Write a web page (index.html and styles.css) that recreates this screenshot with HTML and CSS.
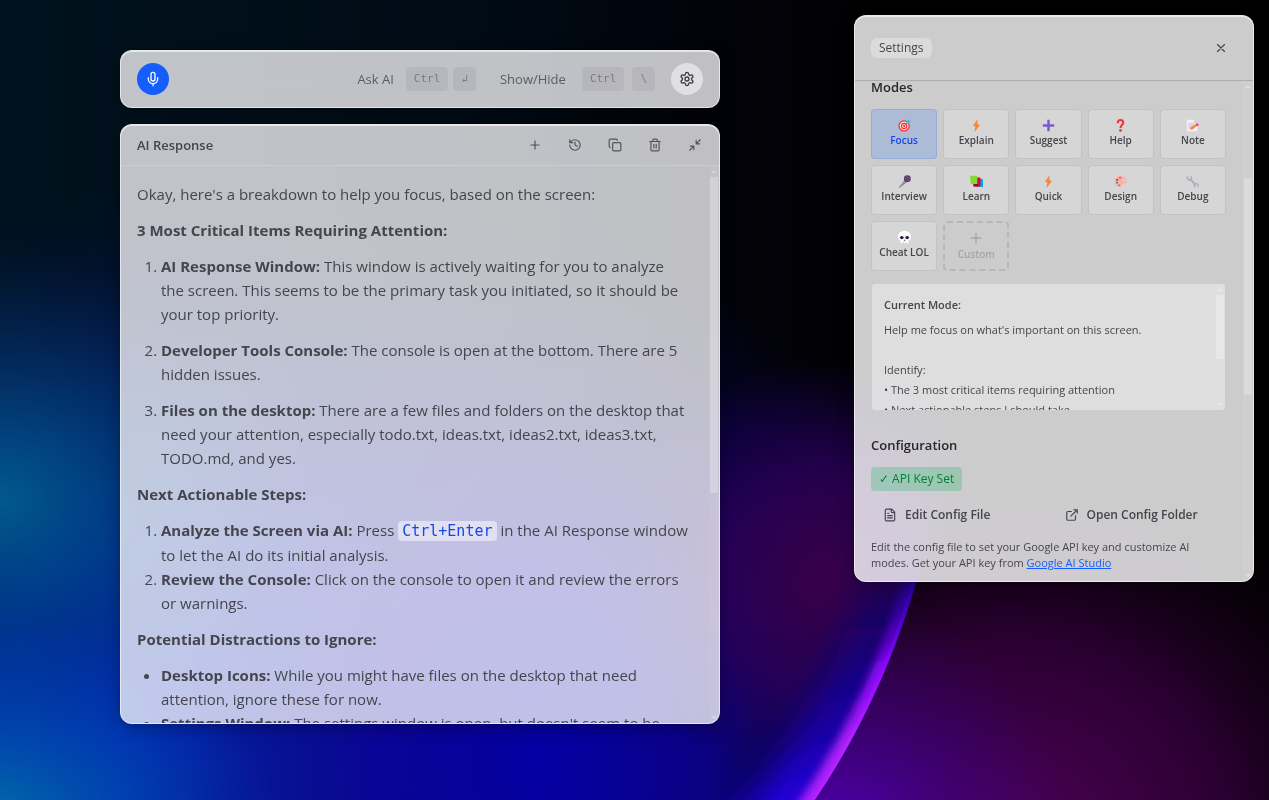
FILE: index.html
```html
<!DOCTYPE html>
<html lang="en">
<head>
<meta charset="utf-8">
<meta name="viewport" content="width=device-width, initial-scale=1">
<title>AI Response</title>
<link rel="stylesheet" href="styles.css">
</head>
<body>
<svg class="wallpaper" viewBox="0 0 1269 800" preserveAspectRatio="xMidYMid slice" aria-hidden="true">
  <defs>
    <radialGradient id="teal" gradientUnits="userSpaceOnUse" cx="0" cy="0" r="1" gradientTransform="translate(-20 830) scale(300 220)"><stop offset="0" stop-color="#0078a4"/><stop offset=".4" stop-color="#0058b0" stop-opacity=".7"/><stop offset="1" stop-color="#0040b8" stop-opacity="0"/></radialGradient>
    <radialGradient id="steel" gradientUnits="userSpaceOnUse" cx="0" cy="0" r="1" gradientTransform="translate(0 500) scale(300 250)"><stop offset="0" stop-color="#005a8e"/><stop offset=".3" stop-color="#004c84" stop-opacity=".75"/><stop offset="1" stop-color="#003058" stop-opacity="0"/></radialGradient>
    <radialGradient id="blue" gradientUnits="userSpaceOnUse" cx="0" cy="0" r="1" gradientTransform="translate(180 720) scale(600 540)"><stop offset="0" stop-color="#0028b8"/><stop offset=".35" stop-color="#0024a8" stop-opacity=".95"/><stop offset=".7" stop-color="#08146c" stop-opacity=".5"/><stop offset="1" stop-color="#001040" stop-opacity="0"/></radialGradient>
    <radialGradient id="deep" gradientUnits="userSpaceOnUse" cx="0" cy="0" r="1" gradientTransform="translate(540 760) scale(420 520)"><stop offset="0" stop-color="#0400a4"/><stop offset=".4" stop-color="#0c0094" stop-opacity=".85"/><stop offset="1" stop-color="#100060" stop-opacity="0"/></radialGradient>
    <radialGradient id="violet" gradientUnits="userSpaceOnUse" cx="0" cy="0" r="1" gradientTransform="translate(820 580) scale(200 220)"><stop offset="0" stop-color="#380048"/><stop offset=".5" stop-color="#2c0058" stop-opacity=".8"/><stop offset="1" stop-color="#180060" stop-opacity="0"/></radialGradient>
    <radialGradient id="outer" gradientUnits="userSpaceOnUse" cx="0" cy="0" r="1" gradientTransform="translate(1010 840) scale(440 400)"><stop offset="0" stop-color="#500058"/><stop offset=".5" stop-color="#32003a" stop-opacity=".85"/><stop offset="1" stop-color="#100010" stop-opacity="0"/></radialGradient>
    <radialGradient id="outerBlue" gradientUnits="userSpaceOnUse" cx="840" cy="830" r="230"><stop offset="0" stop-color="#5000b0"/><stop offset="1" stop-color="#300080" stop-opacity="0"/></radialGradient>
    <linearGradient id="top" x1="0" y1="0" x2="1" y2="0"><stop offset="0" stop-color="#00121e"/><stop offset=".45" stop-color="#000c16"/><stop offset=".75" stop-color="#020208"/><stop offset="1" stop-color="#000"/></linearGradient>
    <linearGradient id="rim" gradientUnits="userSpaceOnUse" x1="0" y1="540" x2="0" y2="740"><stop offset="0" stop-color="#2000a0" stop-opacity="0"/><stop offset=".3" stop-color="#3800c0" stop-opacity=".7"/><stop offset=".65" stop-color="#9008ff"/><stop offset="1" stop-color="#b420ff"/></linearGradient>
    <linearGradient id="rimBlue" gradientUnits="userSpaceOnUse" x1="0" y1="560" x2="0" y2="800"><stop offset="0" stop-color="#0c0070" stop-opacity="0"/><stop offset=".4" stop-color="#0c0084" stop-opacity=".8"/><stop offset="1" stop-color="#2400e0"/></linearGradient>
    <filter id="soft" x="-20%" y="-20%" width="140%" height="140%"><feGaussianBlur stdDeviation="16"/></filter>
    <filter id="fine" x="-20%" y="-20%" width="140%" height="140%"><feGaussianBlur stdDeviation="5"/></filter>
    <clipPath id="orb"><circle cx="175" cy="370" r="771"/></clipPath>
  </defs>
  <rect width="1269" height="800" fill="#000"/>
  <rect width="1269" height="800" fill="url(#outer)"/>
  <rect width="1269" height="800" fill="url(#outerBlue)"/>
  <g clip-path="url(#orb)">
    <rect width="1000" height="800" fill="url(#top)"/>
    <rect width="1000" height="800" fill="url(#blue)"/>
    <rect width="1000" height="800" fill="url(#deep)"/>
    <rect width="1000" height="800" fill="url(#steel)"/>
    <rect width="1000" height="800" fill="url(#teal)"/>
    <rect width="1000" height="800" fill="url(#violet)"/>
    <circle cx="175" cy="370" r="750" fill="none" stroke="url(#rimBlue)" stroke-width="60" filter="url(#soft)"/>
    <circle cx="175" cy="370" r="766" fill="none" stroke="url(#rim)" stroke-width="14" filter="url(#fine)"/>
    <circle cx="175" cy="370" r="769" fill="none" stroke="url(#rim)" stroke-width="4"/>
  </g>
</svg>

<svg class="symbols" aria-hidden="true">
  <symbol id="i-bolt" viewBox="0 0 16 16"><path d="M9.5 0 3.5 8.5h3.2L5.5 16l7-9H9z" fill="#ff822d"/></symbol>
  <symbol id="i-plus" viewBox="0 0 24 24"><path d="M5 12h14M12 5v14"/></symbol>
</svg>

<main class="desktop">
  <header class="window toolbar">
    <button class="round mic" aria-label="Start listening"><svg viewBox="0 0 24 24" class="icon"><rect x="9" y="2" width="6" height="13" rx="3"/><path d="M19 10v2a7 7 0 0 1-14 0v-2M12 19v3"/></svg></button>
    <div class="shortcut"><span>Ask AI</span><span class="keys"><kbd>Ctrl</kbd><kbd>↲</kbd></span></div>
    <div class="shortcut wide"><span>Show/Hide</span><span class="keys"><kbd>Ctrl</kbd><kbd>\</kbd></span></div>
    <button class="round gear" aria-label="Settings"><svg viewBox="0 0 24 24" class="icon"><path d="M12.2 2h-.4a2 2 0 0 0-2 2v.2a2 2 0 0 1-1 1.7l-.4.3a2 2 0 0 1-2 0l-.2-.1a2 2 0 0 0-2.700.7l-.2.4a2 2 0 0 0 .7 2.700l.2.1a2 2 0 0 1 1 1.700v.6a2 2 0 0 1-1 1.700l-.2.1a2 2 0 0 0-.7 2.700l.2.4a2 2 0 0 0 2.700.7l.2-.1a2 2 0 0 1 2 0l.4.3a2 2 0 0 1 1 1.700v.2a2 2 0 0 0 2 2h.4a2 2 0 0 0 2-2v-.2a2 2 0 0 1 1-1.700l.4-.3a2 2 0 0 1 2 0l.2.1a2 2 0 0 0 2.700-.7l.2-.4a2 2 0 0 0-.7-2.700l-.2-.1a2 2 0 0 1-1-1.700v-.6a2 2 0 0 1 1-1.700l.2-.1a2 2 0 0 0 .7-2.700l-.2-.4a2 2 0 0 0-2.700-.7l-.2.1a2 2 0 0 1-2 0l-.4-.3a2 2 0 0 1-1-1.700V4a2 2 0 0 0-2-2z"/><circle cx="12" cy="12" r="3"/></svg></button>
  </header>

  <section class="window response">
    <div class="response-head">
      <h1>AI Response</h1>
      <div class="actions">
        <button aria-label="New"><svg class="icon"><use href="#i-plus"/></svg></button>
        <button aria-label="History"><svg viewBox="0 0 24 24" class="icon"><path d="M3 12a9 9 0 1 0 9-9 9.750 9.750 0 0 0-6.740 2.740L3 8M3 3v5h5M12 7v5l4 2"/></svg></button>
        <button aria-label="Copy"><svg viewBox="0 0 24 24" class="icon"><rect x="8" y="8" width="14" height="14" rx="2"/><path d="M4 16a2 2 0 0 1-2-2V4a2 2 0 0 1 2-2h10a2 2 0 0 1 2 2"/></svg></button>
        <button aria-label="Delete"><svg viewBox="0 0 24 24" class="icon"><path d="M3 6h18M19 6v14a2 2 0 0 1-2 2H7a2 2 0 0 1-2-2V6M8 6V4a2 2 0 0 1 2-2h4a2 2 0 0 1 2 2v2M10 11v6M14 11v6"/></svg></button>
        <button aria-label="Collapse"><svg viewBox="0 0 24 24" class="icon"><path d="M4 14h6v6M10 14l-7 7M20 10h-6V4M14 10l7-7"/></svg></button>
      </div>
    </div>
    <div class="response-body">
      <article class="prose">
        <p>Okay, here's a breakdown to help you focus, based on the screen:</p>
        <p><strong>3 Most Critical Items Requiring Attention:</strong></p>
        <ol class="loose">
          <li><strong>AI Response Window:</strong> This window is actively waiting for you to analyze the screen. This seems to be the primary task you initiated, so it should be your top priority.</li>
          <li><strong>Developer Tools Console:</strong> The console is open at the bottom. There are 5 hidden issues.</li>
          <li><strong>Files on the desktop:</strong> There are a few files and folders on the desktop that need your attention, especially todo.txt, ideas.txt, ideas2.txt, ideas3.txt, TODO.md, and yes.</li>
        </ol>
        <p><strong>Next Actionable Steps:</strong></p>
        <ol>
          <li><strong>Analyze the Screen via AI:</strong> Press <code>Ctrl+Enter</code> in the AI Response window to let the AI do its initial analysis.</li>
          <li><strong>Review the Console:</strong> Click on the console to open it and review the errors or warnings.</li>
        </ol>
        <p><strong>Potential Distractions to Ignore:</strong></p>
        <ul>
          <li><strong>Desktop Icons:</strong> While you might have files on the desktop that need attention, ignore these for now.</li>
          <li><strong>Settings Window:</strong> The settings window is open, but doesn't seem to be</li>
        </ul>
      </article>
      <div class="scrollbar" aria-hidden="true"><i class="up"></i><div class="track"><div class="thumb thumb-response"></div></div><i class="down"></i></div>
    </div>
  </section>

  <aside class="window settings">
    <div class="settings-head">
      <h2 class="pill">Settings</h2>
      <button aria-label="Close"><svg viewBox="0 0 24 24" class="icon"><path d="M18 6 6 18M6 6l12 12"/></svg></button>
    </div>
    <div class="settings-body">
      <div class="settings-content">
        <h3>Modes</h3>
        <div class="modes">
          <button class="mode active"><svg viewBox="0 0 16 16"><circle cx="7.500" cy="8.500" r="7" fill="#f8312f"/><circle cx="7.500" cy="8.500" r="5.400" fill="#f4e6e6"/><circle cx="7.500" cy="8.500" r="3.900" fill="#f8312f"/><circle cx="7.500" cy="8.500" r="2.500" fill="#f4e6e6"/><circle cx="7.500" cy="8.500" r="1.300" fill="#f8312f"/><path d="m8 8 4-4" stroke="#1990d8" stroke-width="1.200"/><path d="m10 6 .5-3.500L13.500 0l.5 2 2 .5-2.500 3z" fill="#42b8f5"/></svg>Focus</button>
          <button class="mode"><svg><use href="#i-bolt"/></svg>Explain</button>
          <button class="mode"><svg viewBox="0 0 16 16"><path d="M6.500 1h3v5.500H15v3H9.500V15h-3V9.500H1v-3h5.500z" fill="#7a5bcf"/></svg>Suggest</button>
          <button class="mode"><svg viewBox="0 0 16 16"><path d="M4.500 5.200C4.500 0 11.500.2 11.500 4.400 11.500 7.400 8 7.500 8 11" fill="none" stroke="#f8312f" stroke-width="2.500"/><circle cx="8" cy="14" r="1.700" fill="#f8312f"/></svg>Help</button>
          <button class="mode"><svg viewBox="0 0 16 16"><path d="M1 1h9l4 4v10H1z" fill="#f3eef8"/><path d="M10 1v4h4z" fill="#cdc4d6"/><path d="M3 6h7M3 8.500h8M3 11h5" stroke="#b4acbc"/><path d="m5 13 1-3 6-4 2 2-6 5z" fill="#ff822d"/><path d="m12 6 1.500-1L16 7.500 14 9z" fill="#f92f60"/></svg>Note</button>
          <button class="mode"><svg viewBox="0 0 16 16"><path d="m1 15 7-9 3 3-9 7z" fill="#998f9b"/><circle cx="11.500" cy="4.500" r="4.200" fill="#533566"/><path d="m8 3 6 5M10 1l5 4" stroke="#8f7b9f"/></svg>Interview</button>
          <button class="mode"><svg viewBox="0 0 16 16"><path d="M8 5h8v10l-7-1z" fill="#00a6ed"/><path d="M6 3h7v11H6z" fill="#ca0b4a"/><path d="M4 11h6v3H4z" fill="#990838"/><path d="M0 1h9v10H1z" fill="#86d72f"/></svg>Learn</button>
          <button class="mode"><svg><use href="#i-bolt"/></svg>Quick</button>
          <button class="mode"><svg viewBox="0 0 16 16"><path d="M8 1C3.500 1 1 4 1 8c0 4.500 3 7 6 7 3 0 1.500-3.500 4-4 2-.4 4.500 0 4.500-3C15.500 4 12 1 8 1z" fill="#ffb0a0"/><circle cx="4" cy="6" r="1.200" fill="#ca0b4a"/><circle cx="7.500" cy="3.500" r="1.200" fill="#8d65c5"/><circle cx="3.800" cy="9.500" r="1.200" fill="#00a67d"/><circle cx="6.500" cy="12.500" r="1.200" fill="#5092ff"/><circle cx="12" cy="6.500" r="1.600" fill="#d6d4d4"/></svg>Design</button>
          <button class="mode"><svg viewBox="0 0 16 16"><path d="m4.500 4.500 7.500 8" stroke="#b4acbc" stroke-width="2.400"/><path d="M1.500 1.500v3l3 2 2.500-2-1-3M15 14.500l-.2-3-3-1-2 2 1.500 3" fill="none" stroke="#b4acbc" stroke-width="1.700"/></svg>Debug</button>
          <button class="mode"><svg viewBox="0 0 16 16"><path d="M8 0C3 0 0 3 0 7c0 3 1 4 3 4.500V14q0 1 1 1h8q1 0 1-1v-2.500c2-.5 3-1.500 3-4.500C16 3 13 0 8 0z" fill="#fff"/><ellipse cx="4.700" cy="8" rx="2.300" ry="2" fill="#321b41"/><ellipse cx="11.300" cy="8" rx="2.300" ry="2" fill="#321b41"/><path d="M8 10.500 7.200 12h1.600zM6.500 13v2M9.500 13v2" stroke="#9b8f9f" stroke-width=".5"/></svg>Cheat LOL</button>
          <button class="mode custom"><svg class="icon"><use href="#i-plus"/></svg>Custom</button>
        </div>
        <div class="prompt">
          <div class="prompt-text"><strong>Current Mode:</strong><p>Help me focus on what's important on this screen.

Identify:
• The 3 most critical items requiring attention
• Next actionable steps I should take</p></div>
          <div class="scrollbar" aria-hidden="true"><i class="up"></i><div class="track"><div class="thumb thumb-prompt"></div></div><i class="down"></i></div>
        </div>
        <h3>Configuration</h3>
        <span class="badge">✓ API Key Set</span>
        <div class="links">
          <button><svg viewBox="0 0 24 24" class="icon"><path d="M15 2H6a2 2 0 0 0-2 2v16a2 2 0 0 0 2 2h12a2 2 0 0 0 2-2V7zM14 2v4a2 2 0 0 0 2 2h4M10 9H8M16 13H8M16 17H8"/></svg>Edit Config File</button>
          <button><svg viewBox="0 0 24 24" class="icon"><path d="M15 3h6v6M10 14 21 3M18 13v6a2 2 0 0 1-2 2H5a2 2 0 0 1-2-2V8a2 2 0 0 1 2-2h6"/></svg>Open Config Folder</button>
        </div>
        <p class="hint">Edit the config file to set your Google API key and customize AI modes. Get your API key from <a href="#">Google AI Studio</a></p>
      </div>
      <div class="scrollbar" aria-hidden="true"><i class="up"></i><div class="track"><div class="thumb thumb-settings"></div></div><i class="down"></i></div>
    </div>
  </aside>
</main>
</body>
</html>
```
FILE: styles.css
```css
* { box-sizing: border-box; }

body {
  margin: 0;
  background: #000;
  color: #45454d;
  font-family: "Open Sans", "Noto Sans", sans-serif;
  font-size: 15px;
  line-height: 24px;
  overflow: hidden;
}

h1, h2, h3, p { margin: 0; }

button {
  display: flex;
  align-items: center;
  justify-content: center;
  padding: 0;
  border: 0;
  background: none;
  color: inherit;
  font: inherit;
}

.wallpaper { position: fixed; inset: 0; width: 100%; height: 100%; }
.symbols { position: absolute; width: 0; height: 0; }

.icon {
  width: 14px;
  height: 14px;
  fill: none;
  stroke: currentColor;
  stroke-width: 2;
  stroke-linecap: round;
  stroke-linejoin: round;
}

.desktop { position: relative; height: 100vh; }

.window {
  position: absolute;
  border: 1px solid rgba(255, 255, 255, .6);
  border-radius: 12px;
  background: rgba(246, 246, 248, .78);
  backdrop-filter: blur(24px) saturate(1.2);
  box-shadow: inset 0 1px 0 rgba(255, 255, 255, .6), 0 4px 16px rgba(0, 0, 0, .3);
  overflow: hidden;
}

.toolbar {
  left: 120px;
  top: 50px;
  width: 600px;
  display: flex;
  align-items: center;
  gap: 16px;
  padding: 12px 16px;
  color: #5c5c64;
  font-size: 13px;
}

.round { width: 32px; height: 32px; border-radius: 50%; }
.mic { margin-right: auto; background: #155dfc; color: #fff; }
.mic .icon { width: 16px; height: 16px; }
.gear { background: rgba(255, 255, 255, .5); color: #3f3f46; }
.gear .icon { width: 16px; height: 16px; }

.shortcut, .keys { display: flex; align-items: center; }
.shortcut { gap: 12px; margin-right: 8px; }
.keys { gap: 5px; }
.shortcut.wide { gap: 16px; margin-right: 0; }
.shortcut.wide .keys { gap: 8px; }

kbd {
  padding: 0 8px;
  border-radius: 4px;
  background: rgba(160, 160, 168, .3);
  color: #7c7c84;
  font-family: "DejaVu Sans Mono", monospace;
  font-size: 11px;
  line-height: 24px;
}

.response {
  left: 120px;
  top: 124px;
  width: 600px;
  height: calc(100vh - 200px);
  display: flex;
  flex-direction: column;
}

.response-head {
  display: flex;
  align-items: center;
  justify-content: space-between;
  padding: 8px 12px 8px 16px;
  border-bottom: 1px solid rgba(255, 255, 255, .2);
}

.response-head h1 { font-size: 13px; font-weight: 600; }
.actions { display: flex; gap: 16px; color: #52525b; }
.actions button { width: 24px; height: 24px; }

.response-body, .settings-body { display: flex; flex: 1; min-height: 0; }
.prose { flex: 1; padding: 16px 20px 0 16px; overflow: hidden; }
.prose p { margin-bottom: 12px; }
.prose ol, .prose ul { margin: 0 0 12px; padding-left: 24px; }
.loose li { margin-bottom: 12px; }

code {
  padding: 1px 4px;
  border-radius: 4px;
  background: rgba(255, 255, 255, .5);
  color: #1447e6;
  font-family: "DejaVu Sans Mono", monospace;
  font-size: 15px;
}

.scrollbar {
  display: flex;
  flex-direction: column;
  align-items: center;
  flex: none;
  width: 10px;
  padding: 4px 0;
  background: rgba(255, 255, 255, .06);
}
.scrollbar i { border: 3px solid transparent; }
.scrollbar .up { border-top: 0; border-bottom-color: rgba(255, 255, 255, .3); }
.scrollbar .down { border-bottom: 0; border-top-color: rgba(255, 255, 255, .3); }
.track { flex: 1; padding: 4px 0; }
.thumb { width: 8px; background: rgba(255, 255, 255, .25); }
.thumb-response { height: 59%; }
.thumb-settings { height: 217px; margin-top: 86px; }
.thumb-prompt { height: 64px; }

.settings {
  right: 15px;
  top: 15px;
  width: 400px;
  height: calc(100vh - 233px);
  display: flex;
  flex-direction: column;
  background: rgba(255, 255, 255, .8);
}

.settings-head {
  display: flex;
  align-items: center;
  justify-content: space-between;
  height: 65px;
  padding: 0 20px 0 16px;
  border-bottom: 1px solid rgba(0, 0, 0, .15);
}
.settings-head button { width: 24px; height: 24px; }

.pill {
  padding: 0 8px;
  border-radius: 6px;
  background: rgba(255, 255, 255, .3);
  font-size: 12px;
  font-weight: 500;
  line-height: 20px;
}

.settings-content { flex: 1; padding: 0 17px 0 16px; overflow: hidden; }

h3 { color: #27272a; font-size: 13px; font-weight: 600; line-height: 12px; }

.modes {
  display: grid;
  grid-template-columns: repeat(5, 1fr);
  gap: 6px;
  margin: 16px 0 12px;
}

.mode {
  flex-direction: column;
  height: 50px;
  padding-bottom: 2px;
  border: 1px solid rgba(0, 0, 0, .09);
  border-radius: 4px;
  background: rgba(255, 255, 255, .2);
  font-size: 10px;
  font-weight: 600;
  line-height: 16px;
  white-space: nowrap;
}
.mode svg { width: 13px; height: 13px; }
.mode.active { background: rgba(43, 127, 255, .2); border-color: rgba(43, 100, 255, .2); color: #1447e6; }
.mode.custom { padding: 0; border: 2px dashed rgba(0, 0, 0, .1); background: none; color: #a3a3ac; }
.mode.custom .icon { width: 16px; height: 16px; }

.prompt {
  display: flex;
  height: 128px;
  margin-bottom: 28px;
  border: 1px solid rgba(0, 0, 0, .08);
  border-radius: 4px;
  background: rgba(255, 255, 255, .35);
  font-size: 11px;
  line-height: 20px;
  overflow: hidden;
}
.prompt-text { flex: 1; padding: 11px 12px 0; }
.prompt strong { display: block; margin-bottom: 5px; font-weight: 600; }
.prompt p { white-space: pre-line; }

.badge {
  display: inline-block;
  margin-top: 16px;
  padding: 0 8px;
  border-radius: 4px;
  background: rgba(0, 180, 80, .24);
  color: #008236;
  font-size: 12px;
  line-height: 24px;
}

.links {
  display: grid;
  grid-template-columns: 1fr 1fr;
  gap: 8px;
  margin: 8px 0;
  font-size: 12px;
  font-weight: 600;
  line-height: 32px;
}
.links button { gap: 8px; padding-left: 12px; justify-content: flex-start; }

.hint { font-size: 11px; line-height: 16px; }
.hint a { color: #155dfc; }
```
